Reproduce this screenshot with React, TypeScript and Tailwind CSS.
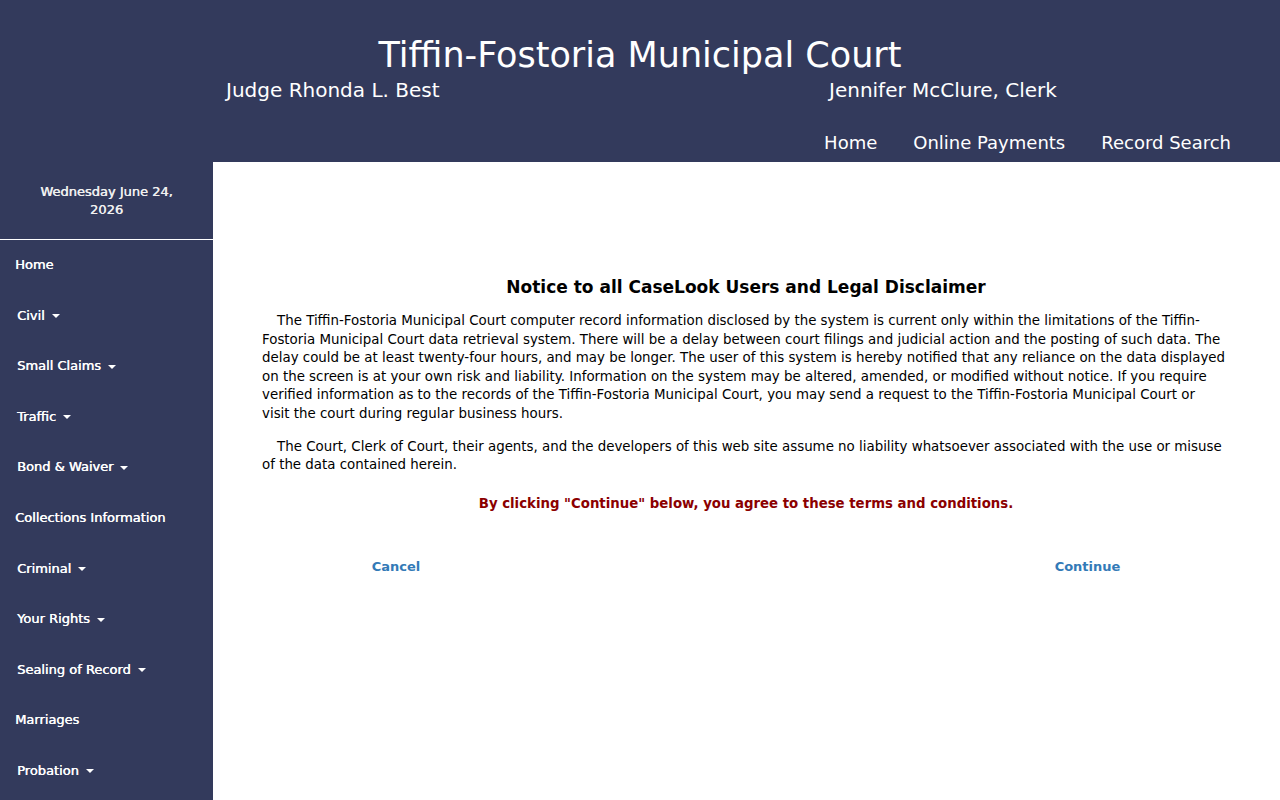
import React from "react";

const font = { fontFamily: '"DejaVu Sans", Verdana, sans-serif' };

type MenuItem = { label: string; drop?: boolean };

const menu: MenuItem[] = [
  { label: "Home" },
  { label: "Civil", drop: true },
  { label: "Small Claims", drop: true },
  { label: "Traffic", drop: true },
  { label: "Bond & Waiver", drop: true },
  { label: "Collections Information" },
  { label: "Criminal", drop: true },
  { label: "Your Rights", drop: true },
  { label: "Sealing of Record", drop: true },
  { label: "Marriages" },
  { label: "Probation", drop: true },
];

function Caret() {
  return (
    <span className="ml-[7px] inline-block h-0 w-0 border-x-[4px] border-t-[4px] border-x-transparent border-t-white align-middle" />
  );
}

export default function App() {
  return (
    <div className="min-h-[800px] w-[1280px] bg-white" style={font}>
      <header className="h-[162px] bg-[#333a5c] text-white">
        <div className="pt-[32px] text-center text-[35px] leading-[46px]">
          Tiffin-Fostoria Municipal Court
        </div>
        <div className="flex text-[20px] leading-[24px]">
          <div className="w-[829px] pl-[226px]">Judge Rhonda L. Best</div>
          <div>Jennifer McClure, Clerk</div>
        </div>
        <nav className="flex justify-end gap-[36px] pr-[49px] pt-[29px] text-[18px] leading-[24px]">
          <a>Home</a>
          <a>Online Payments</a>
          <a>Record Search</a>
        </nav>
      </header>
      <div className="flex">
        <aside className="min-h-[638px] w-[213px] shrink-0 bg-[#333a5c] text-white">
          <div className="flex h-[77px] items-center justify-center px-4 text-center text-[13px] leading-[18px] text-[#f0f0f0] [text-shadow:0.4px_0_0_currentColor]">
            Wednesday June 24,
            <br />
            2026
          </div>
          <div className="h-px bg-white" />
          <ul className="pt-[16px] text-[13px] leading-[18px] [text-shadow:0.4px_0_0_currentColor]">
            {menu.map((m) => (
              <li
                key={m.label}
                className={`h-[50.6px] ${m.drop ? "pl-[17px]" : "pl-[15px]"}`}
              >
                {m.label}
                {m.drop && <Caret />}
              </li>
            ))}
          </ul>
        </aside>
        <main className="min-w-0 flex-1 pl-[49px] pr-[54px] pt-[114px] text-[13.38px] leading-[18.6px] text-black">
          <h1 className="pl-[4px] text-center text-[17px] font-bold leading-[22px]">
            Notice to all CaseLook Users and Legal Disclaimer
          </h1>
          <p className="mt-[14px] indent-[15px]">
            The Tiffin-Fostoria Municipal Court computer record information disclosed by the system is current only within the limitations of the Tiffin-Fostoria Municipal Court data retrieval system. There will be a delay between court filings and judicial action and the posting of such data. The delay could be at least twenty-four hours, and may be longer. The user of this system is hereby notified that any reliance on the data displayed on the screen is at your own risk and liability. Information on the system may be altered, amended, or modified without notice. If you require verified information as to the records of the Tiffin-Fostoria Municipal Court, you may send a request to the Tiffin-Fostoria Municipal Court or visit the court during regular business hours.
          </p>
          <p className="mt-[14px] indent-[15px]">
            The Court, Clerk of Court, their agents, and the developers of this web site assume no liability whatsoever associated with the use or misuse of the data contained herein.
          </p>
          <p className="mt-[20px] pl-[4px] text-center text-[13.3px] font-bold text-[#8b0000]">
            By clicking "Continue" below, you agree to these terms and conditions.
          </p>
          <div className="mt-[45px] flex text-[13px] font-bold text-[#337ab7]">
            <div className="w-[268px] text-center">Cancel</div>
            <div className="w-[500px]" />
            <div className="w-[115px] text-center">Continue</div>
          </div>
        </main>
      </div>
    </div>
  );
}
